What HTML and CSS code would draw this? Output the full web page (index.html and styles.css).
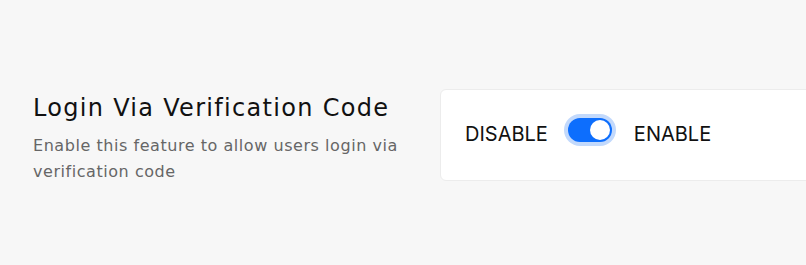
FILE: index.html
```html
<!DOCTYPE html>
<html>
<head>
<meta charset="utf-8">
<link rel="stylesheet" href="styles.css">
</head>
<body>
<div class="page">
  <div class="setting">
    <div class="info">
      <h2 class="title">Login Via Verification Code</h2>
      <p class="desc">Enable this feature to allow users login via verification code</p>
    </div>
    <div class="card">
      <div class="toggle-row">
        <span class="label">DISABLE</span>
        <span class="switch" role="switch" aria-checked="true"><span class="knob"></span></span>
        <span class="label">ENABLE</span>
      </div>
    </div>
  </div>
</div>
</body>
</html>
```
FILE: styles.css
```css
html, body {
  margin: 0;
  padding: 0;
  background: #f7f7f7;
  overflow: hidden;
}
.page {
  width: 806px;
  height: 265px;
  padding: 89px 0 0 33px;
  box-sizing: border-box;
}
.setting {
  display: flex;
  align-items: flex-start;
}
.info {
  width: 407px;
  flex: none;
  padding-top: 4px;
}
.title {
  margin: 0;
  font-family: "DejaVu Sans", sans-serif;
  font-weight: normal;
  font-size: 24px;
  line-height: 30px;
  letter-spacing: 1.3px;
  color: #111;
}
.desc {
  margin: 10px 0 0;
  width: 380px;
  font-family: "DejaVu Sans", sans-serif;
  font-size: 16px;
  line-height: 26px;
  letter-spacing: 0.55px;
  color: #666;
}
.card {
  flex: none;
  width: 500px;
  height: 92px;
  box-sizing: border-box;
  background: #fff;
  border: 1px solid #ececec;
  border-radius: 6px;
  padding: 28px 24px;
}
.toggle-row {
  display: flex;
  align-items: flex-start;
  gap: 20px;
}
.label {
  font-family: Inter, sans-serif;
  font-size: 20px;
  color: #111;
  line-height: 26px;
  margin-top: 3px;
}
.switch {
  position: relative;
  display: inline-block;
  width: 44px;
  height: 24px;
  border-radius: 12px;
  background: #0d6efd;
  box-shadow: 0 0 0 4px #c2d9fc;
  margin-right: 2px;
}
.knob {
  position: absolute;
  top: 2px;
  right: 2px;
  width: 20px;
  height: 20px;
  border-radius: 50%;
  background: #fff;
}
```
